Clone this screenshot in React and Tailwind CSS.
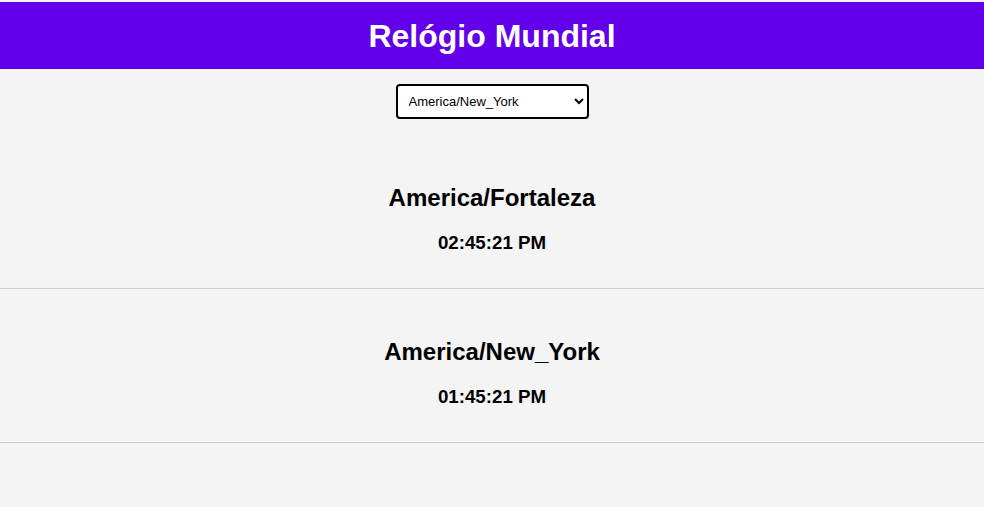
import { useState } from "react";

const zones = [
  { name: "America/Fortaleza", time: "02:45:21 PM" },
  { name: "America/New_York", time: "01:45:21 PM" },
];

const options = [
  "America/New_York",
  "America/Fortaleza",
  "Europe/London",
  "Asia/Tokyo",
];

const App = () => {
  const [selected, setSelected] = useState("America/New_York");

  return (
    <div
      className="min-h-[507px] bg-[#f4f4f4] pt-[2px] text-black"
      style={{ fontFamily: '"Liberation Sans", Arial, sans-serif' }}
    >
      <header className="bg-[#6200ea] h-[67px] flex items-center justify-center">
        <h1 className="text-[32px] font-bold text-white leading-none">
          Relógio Mundial
        </h1>
      </header>

      <div className="flex justify-center mt-[15px]">
        <select
          value={selected}
          onChange={(e) => setSelected(e.target.value)}
          className="w-[193px] h-[35px] border-2 border-black rounded bg-white pl-[7px] pr-1 text-[13px] text-black"
        >
          {options.map((o) => (
            <option key={o} value={o}>
              {o}
            </option>
          ))}
        </select>
      </div>

      <div className="mt-4">
        {zones.map((z) => (
          <ZoneRow key={z.name} zone={z} />
        ))}
      </div>
    </div>
  );
};

const ZoneRow = ({ zone }) => (
  <div className="border-b border-[#cccccc] pt-[49px] pb-[35px] text-center">
    <h2 className="text-2xl font-bold leading-[28px]">{zone.name}</h2>
    <p className="mt-[21px] text-[18.72px] font-bold leading-[20px]">{zone.time}</p>
  </div>
);

export default App;
